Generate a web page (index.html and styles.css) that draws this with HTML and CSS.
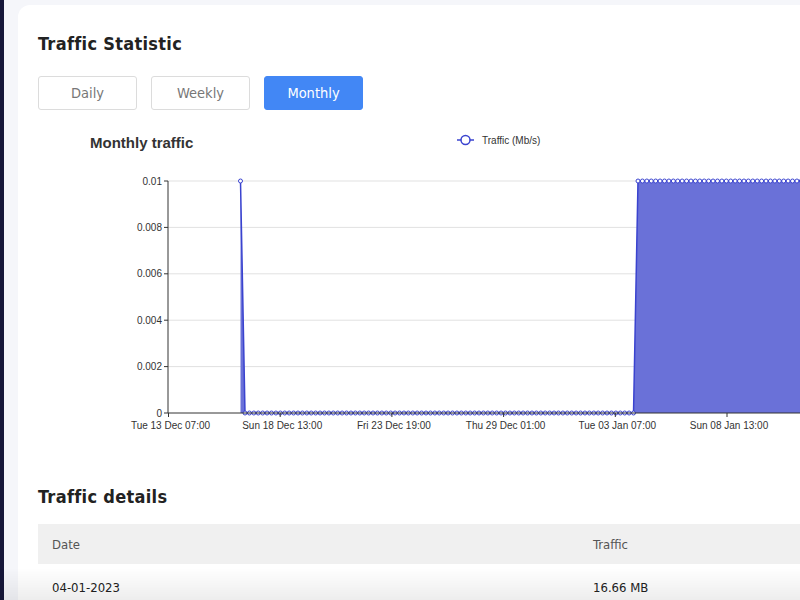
FILE: index.html
```html
<!DOCTYPE html>
<html lang="en">
<head>
    <meta charset="UTF-8">
    <meta name="viewport" content="width=device-width, initial-scale=1.0">
    <title>Traffic Statistic</title>
    <link rel="stylesheet" href="styles.css">
</head>
<body>
    <div class="rail"></div>

    <div class="main">
        <div class="card">
            <h2>Traffic Statistic</h2>

            <div class="tabs">
                <button class="tab">Daily</button>
                <button class="tab">Weekly</button>
                <button class="tab active">Monthly</button>
            </div>

            <!-- Chart -->
            <svg id="chart" class="chart" width="1082" height="320">
                <text class="chart-title" x="52" y="22">Monthly traffic</text>
                <g class="legend">
                    <line x1="419" y1="14" x2="436" y2="14"></line>
                    <circle cx="427.5" cy="14" r="4.5"></circle>
                    <text x="444" y="17.5">Traffic (Mb/s)</text>
                </g>
                <g id="grid"></g>
                <g id="series"></g>
                <g id="axes"></g>
            </svg>

            <h2 class="details-title">Traffic details</h2>

            <table class="details">
                <thead>
                    <tr>
                        <th>Date</th>
                        <th>Traffic</th>
                    </tr>
                </thead>
                <tbody>
                    <tr>
                        <td>04-01-2023</td>
                        <td>16.66 MB</td>
                    </tr>
                </tbody>
            </table>
        </div>
    </div>

    <script>
        const NS = 'http://www.w3.org/2000/svg';
        const plotLeft = 130, plotTop = 55, plotBottom = 287, plotRight = 1082;

        function el(parent, tag, attrs, text) {
            const node = document.createElementNS(NS, tag);
            for (const k in attrs) node.setAttribute(k, attrs[k]);
            if (text) node.textContent = text;
            document.getElementById(parent).appendChild(node);
            return node;
        }

        // y grid + labels
        const yLabels = ['0', '0.002', '0.004', '0.006', '0.008', '0.01'];
        yLabels.forEach((label, i) => {
            const y = plotBottom - i * (plotBottom - plotTop) / 5;
            if (i > 0) el('grid', 'line', { x1: plotLeft, y1: y, x2: plotRight, y2: y, class: 'gridline' });
            el('axes', 'line', { x1: plotLeft - 4, y1: y, x2: plotLeft, y2: y, class: 'axis' });
            el('axes', 'text', { x: plotLeft - 6, y: y + 3.5, class: 'y-label' }, label);
        });

        // x axis ticks
        const xLabels = ['Tue 13 Dec 07:00', 'Sun 18 Dec 13:00', 'Fri 23 Dec 19:00',
                         'Thu 29 Dec 01:00', 'Tue 03 Jan 07:00', 'Sun 08 Jan 13:00'];
        xLabels.forEach((label, i) => {
            const x = 130.5 + i * 111.7;
            el('axes', 'line', { x1: x, y1: plotBottom, x2: x, y2: plotBottom + 4, class: 'axis' });
            el('axes', 'text', { x: x + 2, y: plotBottom + 16, class: 'x-label' }, label);
        });
        el('axes', 'line', { x1: plotLeft, y1: plotTop, x2: plotLeft, y2: plotBottom, class: 'axis' });
        el('axes', 'line', { x1: plotLeft, y1: plotBottom, x2: plotRight, y2: plotBottom, class: 'axis' });

        // data: spike, long run of zeros, then flat at 0.01
        const step = 4.415;
        const points = [[202.5, plotTop]];
        for (let i = 0; i <= 88; i++) points.push([207 + i * step, plotBottom]);
        for (let x = 600; x < 820; x += step) points.push([x, plotTop]);

        const first = points[0], last = points[points.length - 1];
        const line = points.map(p => p.join(',')).join(' ');
        el('series', 'polygon', {
            points: first[0] + ',' + plotBottom + ' ' + line + ' ' + last[0] + ',' + plotBottom,
            class: 'area'
        });
        el('series', 'polyline', { points: line, class: 'line' });
        points.forEach(p => el('series', 'circle', { cx: p[0], cy: p[1], r: 2, class: 'dot' }));
    </script>
</body>
</html>
```

FILE: styles.css
```css
body {
    margin: 0;
    padding: 0;
    display: flex;
    background-color: #f5f6fa;
    font-family: "DejaVu Sans Condensed", "DejaVu Sans", sans-serif;
    overflow: hidden;
    height: 100vh;
}

body::after {
    content: "";
    position: fixed;
    left: 0;
    right: 0;
    bottom: 0;
    height: 32px;
    background: linear-gradient(rgba(0, 0, 0, 0), rgba(0, 0, 0, 0.07));
}

.rail {
    width: 4px;
    flex-shrink: 0;
    background-color: #16173a;
}

.main {
    padding: 5px 0 0 14px;
}

.card {
    width: 1082px;
    padding: 27px 20px 20px 20px;
    background: white;
    border-radius: 12px;
}

h2 {
    margin: 0;
    font-size: 18px;
    line-height: 24px;
    font-weight: bold;
    letter-spacing: 0.3px;
    color: #222;
}

.tabs {
    display: flex;
    gap: 14px;
    margin-top: 20px;
}

.tab {
    width: 99px;
    height: 34px;
    padding: 0;
    font-family: inherit;
    font-size: 14.5px;
    color: #777;
    background: white;
    border: 1px solid #dcdcdc;
    border-radius: 3px;
}

.tab.active {
    color: white;
    background-color: #4287f5;
    border-color: #4287f5;
}

.chart {
    display: block;
    margin-top: 16px;
    font-family: "Liberation Sans", Arial, sans-serif;
}

.chart-title {
    font-size: 15px;
    font-weight: bold;
    fill: #333;
}

.legend line {
    stroke: #3a43cf;
    stroke-width: 1.5;
}

.legend circle {
    fill: white;
    stroke: #3a43cf;
    stroke-width: 1.5;
}

.legend text {
    font-size: 10px;
    fill: #333;
}

.gridline {
    stroke: rgba(0, 0, 0, 0.12);
    stroke-width: 1;
}

.axis {
    stroke: #333;
    stroke-width: 1;
}

.y-label {
    font-size: 10px;
    fill: #333;
    text-anchor: end;
}

.x-label {
    font-size: 10px;
    fill: #333;
    text-anchor: middle;
}

.area {
    fill: #6a71d8;
}

.line {
    fill: none;
    stroke: #3a43cf;
    stroke-width: 1.5;
}

.dot {
    fill: white;
    stroke: #3a43cf;
    stroke-width: 1;
}

.details-title {
    margin-top: 39px;
}

.details {
    width: 100%;
    margin-top: 15px;
    border-collapse: collapse;
    table-layout: fixed;
}

.details th, .details td {
    padding: 0 14px;
    text-align: left;
    font-size: 13px;
}

.details th {
    height: 40px;
    font-weight: normal;
    color: #555;
    background-color: #f0f0f0;
}

.details td {
    height: 46px;
    color: #222;
}
```
